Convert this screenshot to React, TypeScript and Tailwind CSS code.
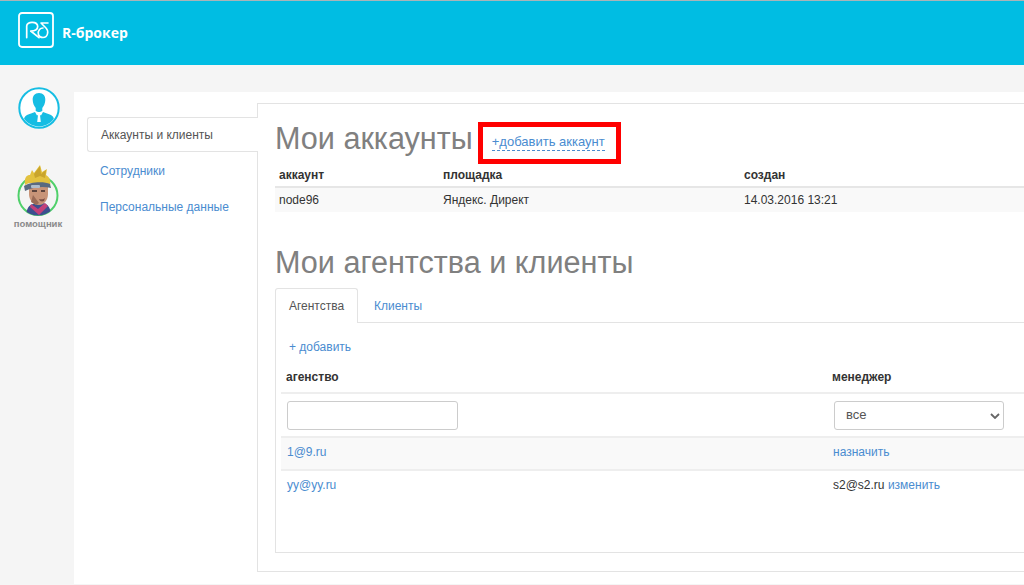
import React from "react";

const Logo = () => (
  <svg width="36" height="36" viewBox="0 0 36 36" fill="none" stroke="white" className="shrink-0">
    <rect x="1" y="1" width="34" height="34" rx="3" strokeWidth="1.800" />
    <path d="M8.700 25.600V14c0-5 11-5 11 .5 0 3-3 4.500-7 4.500L21 25.600" strokeWidth="1.700" strokeLinecap="round" strokeLinejoin="round" />
    <path d="M30 11h-7l5 5c3 3 2 9.500-3 9.500s-6-5-3.500-8c1-1.200 2-1.500 3.500-1.500" strokeWidth="1.600" strokeLinecap="round" strokeLinejoin="round" />
  </svg>
);

const UserAvatar = () => (
  <svg width="42" height="42" viewBox="0 0 42 42" className="block">
    <defs>
      <clipPath id="uc"><circle cx="21" cy="21" r="18.500" /></clipPath>
    </defs>
    <circle cx="21" cy="21" r="19.700" fill="white" stroke="#16bde3" strokeWidth="2" />
    <g clipPath="url(#uc)" fill="#16bde3">
      <path d="M21 6c-4.300 0-6.500 3-6.300 7 .1 3 1.300 6 3 8v3l2.300 1h2l2.300-1v-3c1.700-2 2.900-5 3-8 .2-4-2-7-6.300-7z" />
      <path d="M6 40v-7c0-4 3-5.500 7-6.500l4-1.500 2 3.500 1-.5-.8 7h3.600l-.8-7 1 .5 2-3.500 4 1.500c4 1 7 2.500 7 6.500v7z" />
    </g>
  </svg>
);

const Helper = () => (
  <svg width="46" height="52" viewBox="0 0 46 52" className="block">
    <defs>
      <clipPath id="hc"><path d="M3 0h40v30.500a20 20 0 0 1-40 0z" /></clipPath>
    </defs>
    <circle cx="23" cy="30.500" r="19.500" fill="#f4f4f4" stroke="#4fd06a" strokeWidth="2" />
    <g clipPath="url(#hc)">
      <path d="M11 52c0-8 3-12 7-13l10-1c5 1 8 5 8 14z" fill="#3c4f8f" />
      <path d="M16 39l7 5 7-6 3 3-9 9-9-8z" fill="#c2407a" />
      <path d="M14 19l19 0 0 10c0 6-4 11-9 11-6 0-10-5-10-11z" fill="#c89478" />
      <path d="M18 30l-2 7 5 3 3-2z" fill="#9a6a55" />
      <path d="M24 34c3 .6 5 0 6-1l-1 3c-2 1-4 .6-5-2z" fill="#7c4f45" />
      <path d="M17 26h5M26 26h4" stroke="#3a2a2a" strokeWidth="1.400" />
    </g>
    <path d="M10 20C9 12 12 10 15 10l2-5 2 3L25 0l2 7 5-3-1 6c4 2 5 7 4 11l-4-3H14z" fill="#e3c23f" />
    <path d="M25 1l1 8 5-4-1 8-5-2-5 2-1-4z" fill="#c9a52c" />
    <path d="M9 21c5-4 20-5 26-2l1 4c-8-2-18-1-26 3z" fill="#5a6a80" />
    <rect x="16" y="20" width="9" height="3" rx="1" fill="#aebccb" />
  </svg>
);

const Chevron = () => (
  <svg width="10" height="6" viewBox="0 0 10 6" fill="none" stroke="#666" strokeWidth="1.800" className="absolute right-[3px] top-[11px]">
    <path d="M1 1l4 4 4-4" />
  </svg>
);

export default function App() {
  return (
    <div className="w-[1024px] h-[585px] overflow-hidden flex flex-col bg-[#f5f5f5] text-[12px] text-[#333] font-['Liberation_Sans',Arial,sans-serif]">
      <header className="h-[65px] shrink-0 bg-[#00bde3] border-t border-[#a9b4b8] flex items-center pl-[18px] pb-[7px] gap-[8px]">
        <Logo />
        <span className="mt-[5px] text-white font-bold text-[14px] font-['Open_Sans',sans-serif]">R-брокер</span>
      </header>

      <div className="flex flex-1 min-h-0">
        <aside className="w-[74px] shrink-0 flex flex-col items-center pt-[22px]">
          <div className="ml-[3px]"><UserAvatar /></div>
          <div className="mt-[36px] ml-[2px]"><Helper /></div>
          <span className="mt-[1px] ml-[2px] text-[9.5px] leading-[12px] font-bold text-[#8a8a8a]">помощник</span>
        </aside>

        <main className="flex-1 min-w-0 mt-[27px] mb-[1px] bg-white flex">
          <nav className="w-[183px] shrink-0 pt-[25px] pl-[13px]">
            <div className="relative z-10 h-[35px] w-[171px] flex items-center pl-[13px] bg-white border border-r-0 border-[#e3e3e3] rounded-l-[3px] text-[#555]">
              Аккаунты и клиенты
            </div>
            <a className="block mt-[11px] pl-[13px] leading-[17px] text-[#4a8cd0]">Сотрудники</a>
            <a className="block mt-[19px] pl-[13px] leading-[17px] text-[#4a8cd0]">Персональные данные</a>
          </nav>

          <section className="flex-1 min-w-0 mt-[11px] mb-[12px] border-l border-t border-b border-[#e3e3e3] pl-[17px] flex flex-col">
            <div className="flex items-start h-[59px] pt-[17px]">
              <h1 className="text-[30.6px] leading-[35px] text-[#808080] font-normal whitespace-nowrap">Мои аккаунты</h1>
              <div className="ml-[5px] mt-[1px] h-[42px] w-[143px] shrink-0 border-[5px] border-[#ff0000] flex items-start pl-[9px] pt-[7px]">
                <a className="text-[13px] leading-[16px] text-[#4a8cd0] border-b border-dashed border-[#4a8cd0] whitespace-nowrap">+добавить аккаунт</a>
              </div>
            </div>

            <div className="grid grid-cols-[164px_301px_1fr] h-[25px] items-center border-b-2 border-[#e6e6e6] pl-[4px] font-bold">
              <span>аккаунт</span>
              <span>площадка</span>
              <span>создан</span>
            </div>
            <div className="grid grid-cols-[164px_301px_1fr] h-[24px] items-center bg-[#f9f9f9] pl-[4px]">
              <span>node96</span>
              <span>Яндекс. Директ</span>
              <span>14.03.2016 13:21</span>
            </div>

            <h2 className="mt-[33px] text-[30.6px] leading-[35px] text-[#808080] font-normal whitespace-nowrap">Мои агентства и клиенты</h2>

            <div className="mt-[8px] flex h-[35px] relative z-10">
              <div className="w-[83px] h-[35px] flex items-center justify-center bg-white border border-b-0 border-[#e3e3e3] rounded-t-[3px] text-[#555]">Агентства</div>
              <a className="w-[80px] flex items-center justify-center text-[#4a8cd0]">Клиенты</a>
            </div>

            <div className="-mt-px h-[231px] border-t border-l border-b border-[#e3e3e3] pl-[5px] flex flex-col">
              <a className="mt-[16px] ml-[8px] leading-[17px] text-[#4a8cd0]">+ добавить</a>
              <div className="mt-[9px] grid grid-cols-[546px_1fr] h-[24px] pl-[5px] items-center font-bold">
                <span>агенство</span>
                <span>менеджер</span>
              </div>
              <div className="mt-[3px] grid grid-cols-[547px_1fr] h-[44px] pl-[6px] items-center border-t-2 border-[#eeeeee]">
                <input className="w-[171px] h-[29px] bg-white border border-[#cccccc] rounded-[3px]" />
                <div className="relative w-[170px] h-[29px] bg-white border border-[#cccccc] rounded-[3px] flex items-center pl-[11px] text-[13px] text-[#555]">
                  все
                  <Chevron />
                </div>
              </div>
              <div className="grid grid-cols-[546px_1fr] h-[35px] pl-[6px] pb-[3px] items-center bg-[#f9f9f9] border-y-2 border-[#eeeeee]">
                <a className="text-[#4a8cd0]">1@9.ru</a>
                <a className="text-[#4a8cd0]">назначить</a>
              </div>
              <div className="grid grid-cols-[546px_1fr] pl-[6px] pt-[6px] leading-[17px]">
                <a className="text-[#4a8cd0]">yy@yy.ru</a>
                <span>s2@s2.ru <a className="text-[#4a8cd0]">изменить</a></span>
              </div>
            </div>
          </section>
        </main>
      </div>
    </div>
  );
}
